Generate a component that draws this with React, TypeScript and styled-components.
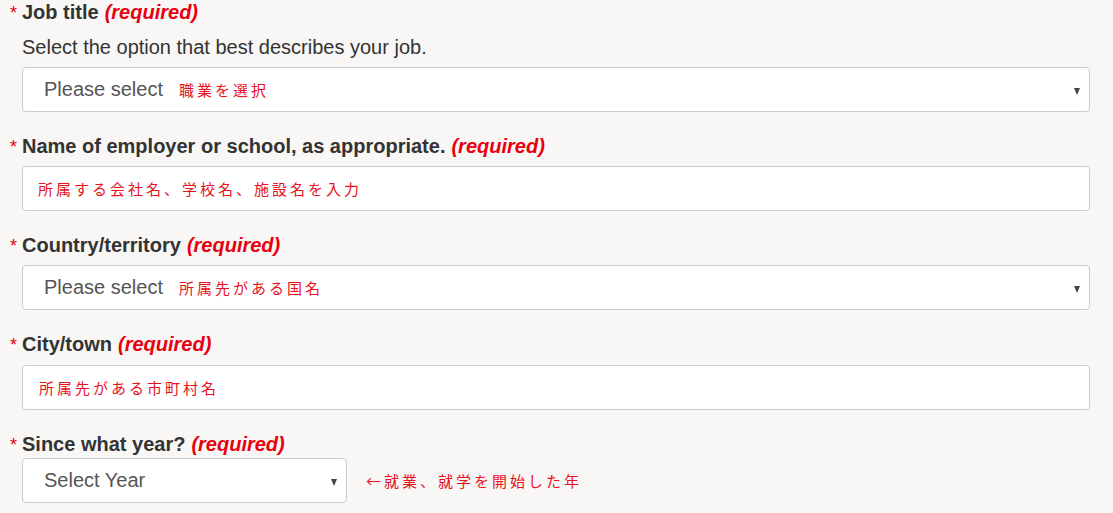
import styled, { createGlobalStyle } from 'styled-components';

const GlobalStyle = createGlobalStyle`
  html, body {
    margin: 0;
    padding: 0;
    background: #f8f7f5;
  }
  body {
    font-family: "Liberation Sans", Arial, sans-serif;
    color: #333;
  }
`;

const Form = styled.div`
  display: flex;
  flex-direction: column;
  gap: 22px;
  padding: 0 23px 0 10px;
`;

const Field = styled.div`
  display: flex;
  flex-direction: column;
`;

const Label = styled.div<{ $gap?: number }>`
  height: 24px;
  font-size: 20px;
  line-height: 24px;
  font-weight: bold;
  color: #333;
  white-space: nowrap;
  margin-bottom: ${(p) => p.$gap ?? 8}px;
`;

const Star = styled.span`
  display: inline-block;
  color: #e8000f;
  font-weight: normal;
  width: 12px;
  font-size: 18px;
  line-height: 20px;
`;

const Required = styled.em`
  color: #e8000f;
  margin-left: 6px;
`;

const Hint = styled.div`
  margin-left: 12px;
  font-size: 20px;
  line-height: 24px;
  color: #333;
  margin-bottom: 8px;
`;

const Box = styled.div<{ $width?: string }>`
  margin-left: 12px;
  width: ${(p) => p.$width ?? 'auto'};
  box-sizing: border-box;
  height: 45px;
  background: #fff;
  border: 1px solid #cdcac6;
  border-radius: 4px;
  display: flex;
  align-items: center;
  position: relative;
`;

const Placeholder = styled.span`
  font-size: 20px;
  color: #555;
  margin-left: 21px;
  margin-right: 16px;
`;

const Jp = styled.span<{ $indent?: number }>`
  font-family: "Noto Sans CJK JP", sans-serif;
  font-size: 15px;
  letter-spacing: 3px;
  color: #e8101c;
  margin-left: ${(p) => p.$indent ?? 0}px;
`;

const Arrow = styled.span`
  position: absolute;
  right: 9px;
  top: 50%;
  margin-top: -2px;
  width: 0;
  height: 0;
  border-left: 3.5px solid transparent;
  border-right: 3.5px solid transparent;
  border-top: 7px solid #444;
`;

const Row = styled.div`
  display: flex;
  align-items: center;
  gap: 19px;
`;

function LabelRow({ text, gap }: { text: string; gap?: number }) {
  return (
    <Label $gap={gap}>
      <Star>*</Star>
      {text}
      <Required>(required)</Required>
    </Label>
  );
}

export default function App() {
  return (
    <>
      <GlobalStyle />
      <Form>
        <Field>
          <LabelRow text="Job title" gap={11} />
          <Hint>Select the option that best describes your job.</Hint>
          <Box>
            <Placeholder>Please select</Placeholder>
            <Jp>職業を選択</Jp>
            <Arrow />
          </Box>
        </Field>
        <Field>
          <LabelRow text="Name of employer or school, as appropriate." />
          <Box>
            <Jp $indent={15}>所属する会社名、学校名、施設名を入力</Jp>
          </Box>
        </Field>
        <Field>
          <LabelRow text="Country/territory" />
          <Box>
            <Placeholder>Please select</Placeholder>
            <Jp>所属先がある国名</Jp>
            <Arrow />
          </Box>
        </Field>
        <Field>
          <LabelRow text="City/town" gap={9} />
          <Box>
            <Jp $indent={16}>所属先がある市町村名</Jp>
          </Box>
        </Field>
        <Field>
          <LabelRow text="Since what year?" gap={2} />
          <Row>
            <Box $width="325px">
              <Placeholder>Select Year</Placeholder>
              <Arrow />
            </Box>
            <Jp>←就業、就学を開始した年</Jp>
          </Row>
        </Field>
      </Form>
    </>
  );
}
